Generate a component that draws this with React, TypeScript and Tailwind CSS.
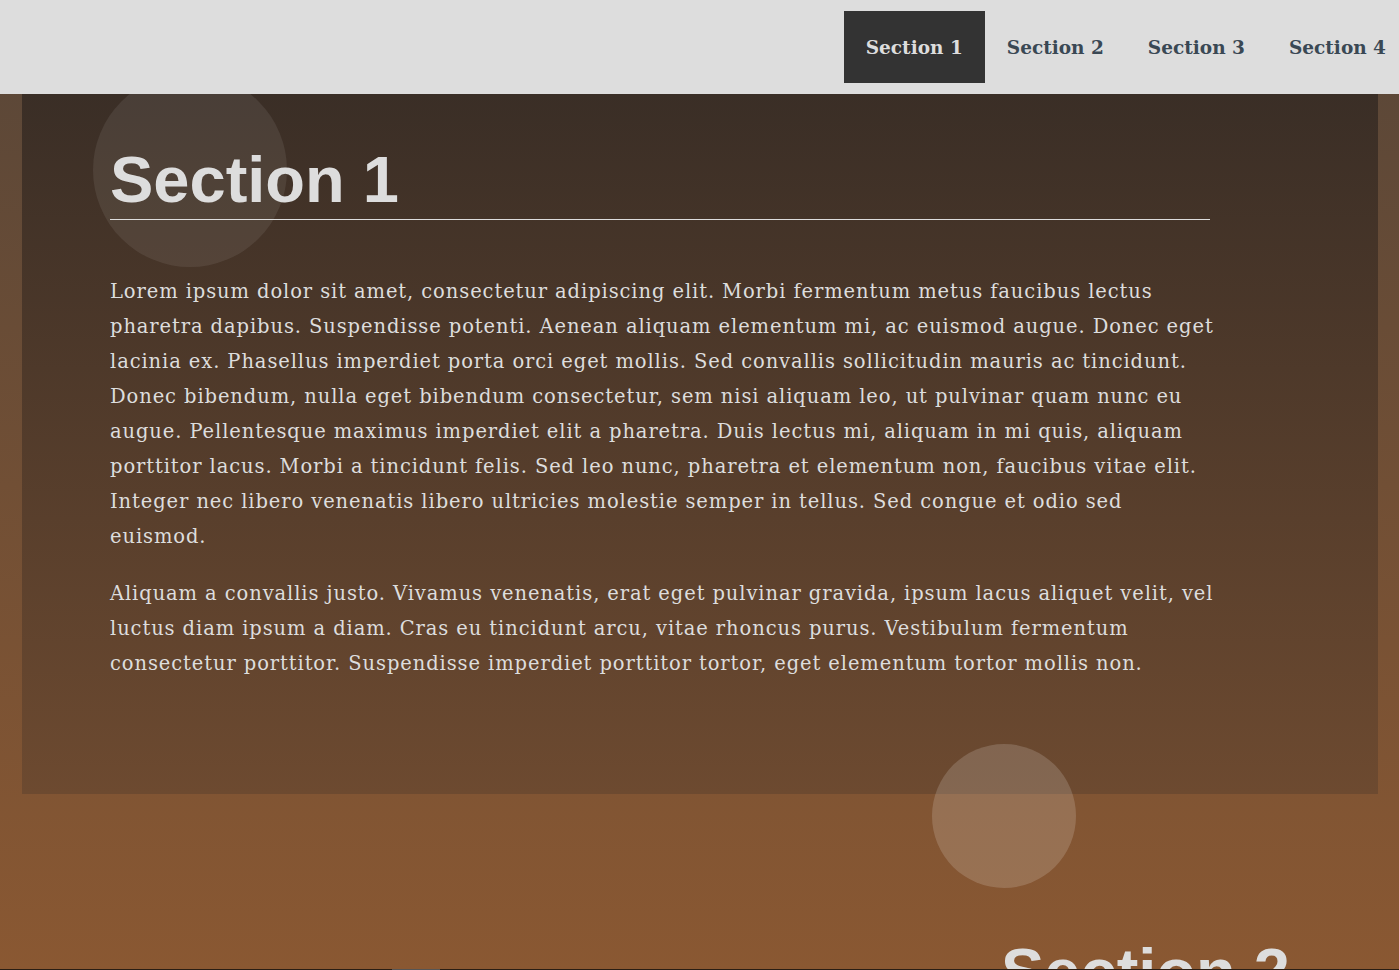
import React from "react";

const para1 = [
  "Lorem ipsum dolor sit amet, consectetur adipiscing elit. Morbi fermentum metus faucibus lectus",
  "pharetra dapibus. Suspendisse potenti. Aenean aliquam elementum mi, ac euismod augue. Donec eget",
  "lacinia ex. Phasellus imperdiet porta orci eget mollis. Sed convallis sollicitudin mauris ac tincidunt.",
  "Donec bibendum, nulla eget bibendum consectetur, sem nisi aliquam leo, ut pulvinar quam nunc eu",
  "augue. Pellentesque maximus imperdiet elit a pharetra. Duis lectus mi, aliquam in mi quis, aliquam",
  "porttitor lacus. Morbi a tincidunt felis. Sed leo nunc, pharetra et elementum non, faucibus vitae elit.",
  "Integer nec libero venenatis libero ultricies molestie semper in tellus. Sed congue et odio sed",
  "euismod.",
];

const para2 = [
  "Aliquam a convallis justo. Vivamus venenatis, erat eget pulvinar gravida, ipsum lacus aliquet velit, vel",
  "luctus diam ipsum a diam. Cras eu tincidunt arcu, vitae rhoncus purus. Vestibulum fermentum",
  "consectetur porttitor. Suspendisse imperdiet porttitor tortor, eget elementum tortor mollis non.",
];

function NavItem({ label, active }: { label: string; active?: boolean }) {
  return (
    <a
      className={
        active
          ? "flex h-[72px] items-center bg-[#333333] px-[22px] pt-[1px] font-['DejaVu_Serif',serif] text-[18.5px] font-bold text-[#dddddd]"
          : "flex h-[72px] items-center px-[22px] pt-[1px] font-['DejaVu_Serif',serif] text-[18.5px] font-bold text-[#3a4854]"
      }
    >
      {label}
    </a>
  );
}

export default function App() {
  return (
    <div className="relative flex h-[970px] w-full flex-col overflow-hidden bg-[linear-gradient(180deg,#584638_0%,#8a5832_100%)]">
      {/* nav */}
      <nav className="relative z-20 flex h-[94px] shrink-0 items-center justify-end bg-[#dddddd]">
        <div className="mr-[-9px] flex items-center">
          <NavItem label="Section 1" active />
          <NavItem label="Section 2" />
          <NavItem label="Section 3" />
          <NavItem label="Section 4" />
        </div>
      </nav>

      {/* section 1 card */}
      <section className="relative ml-[22px] mr-[21px] h-[700px] shrink-0 bg-[linear-gradient(180deg,#3a2e26_0%,#6d4a30_100%)] pl-[88px] pt-[54px]">
        <div className="absolute left-[71px] top-[-21px] h-[194px] w-[194px] rounded-full bg-[rgba(255,255,255,0.08)]" />
        <div className="relative w-[1100px]">
          <h1 className="border-b border-[#dddddd] pb-[7px] font-['Liberation_Sans',Arial,sans-serif] text-[65px] font-bold leading-[64px] text-[#dddddd]">
            Section 1
          </h1>
          <div className="mt-[54px] font-['DejaVu_Serif',serif] text-[19.5px] leading-[35px] tracking-[0.9px] text-[#dddddd]">
            <p className="mb-[22px]">
              {para1.map((l, i) => (
                <span key={i} className="block whitespace-nowrap">
                  {l}
                </span>
              ))}
            </p>
            <p>
              {para2.map((l, i) => (
                <span key={i} className="block whitespace-nowrap">
                  {l}
                </span>
              ))}
            </p>
          </div>
        </div>
        <div className="absolute left-[910px] top-[650px] z-10 h-[144px] w-[144px] rounded-full bg-[rgba(255,255,255,0.16)]" />
      </section>

      {/* section 2 */}
      <section className="relative ml-[22px] mr-[21px] flex-1 pr-[88px] pt-[146px] text-right">
        <h2 className="font-['Liberation_Sans',Arial,sans-serif] text-[65px] font-bold leading-[64px] text-[#dddddd]">
          Section 2
        </h2>
      </section>
      <div className="absolute bottom-0 left-0 flex h-px w-full bg-[#2a1e14]">
        <span className="ml-[392px] block h-px w-[48px] bg-[#555555]" />
      </div>
    </div>
  );
}
